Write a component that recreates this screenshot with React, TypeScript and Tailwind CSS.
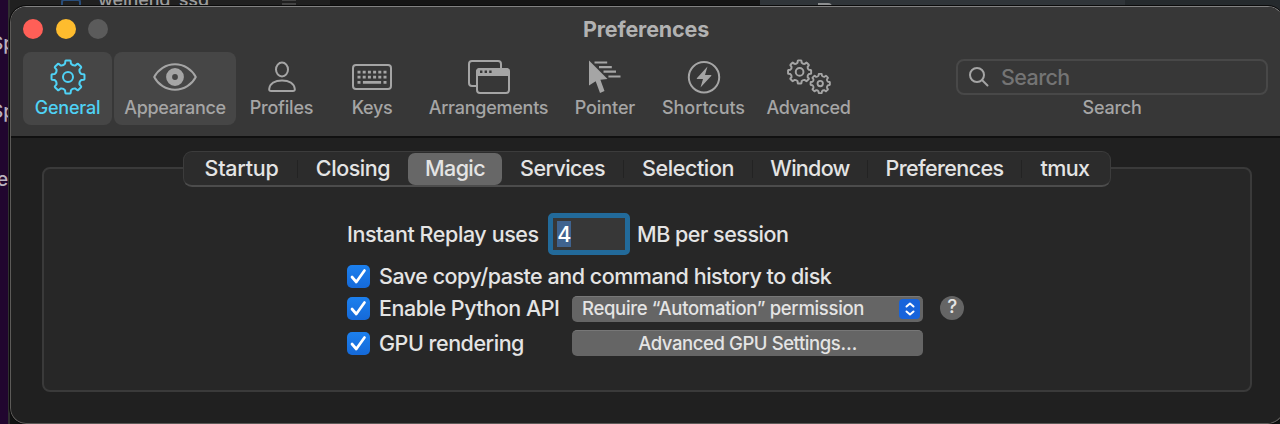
import type { ReactNode } from "react";

function gearPath(outer: number, inner: number) {
  const point = (radius: number, degrees: number) => {
    const a = (degrees * Math.PI) / 180;
    return `${(18 + radius * Math.sin(a)).toFixed(2)} ${(18 - radius * Math.cos(a)).toFixed(2)}`;
  };
  let d = "";
  for (let i = 0; i < 8; i++) {
    const c = i * 45;
    d += `${i === 0 ? "M" : "L"}${point(inner + 0.6, c - 12.5)} L${point(outer - 0.5, c - 9.5)} Q${point(outer, c - 9)} ${point(outer, c - 7)} L${point(outer, c + 7)} Q${point(outer, c + 9)} ${point(outer - 0.5, c + 9.5)} L${point(inner + 0.6, c + 12.5)} Q${point(inner - 1, c + 22.5)} ${point(inner + 0.6, c + 32.5)} `;
  }
  return d + "Z";
}

const GEAR = gearPath(16.6, 13);

function GeneralIcon() {
  return (
    <svg width="36" height="36" viewBox="0 0 36 36" fill="none" stroke="currentColor" strokeWidth="2" strokeLinejoin="round">
      <path d={GEAR} />
      <circle cx="18" cy="18" r="5" />
    </svg>
  );
}

function AppearanceIcon() {
  return (
    <svg width="44" height="30" viewBox="0 0 44 30" fill="none" stroke="currentColor">
      <path d="M1.200 15 C5 7.500 13 2.200 22 2.200 C31 2.200 39 7.500 42.800 15 C39 22.500 31 27.800 22 27.800 C13 27.800 5 22.500 1.200 15Z" strokeWidth="2" strokeLinejoin="round" />
      <circle cx="22" cy="15" r="5.900" strokeWidth="6" />
    </svg>
  );
}

function ProfilesIcon() {
  return (
    <svg width="30" height="32" viewBox="0 0 30 32" fill="none" stroke="currentColor" strokeWidth="2">
      <ellipse cx="15" cy="8.500" rx="6" ry="6.900" />
      <path d="M4.200 30 Q2 30 2.200 28 C2.800 22.500 8 19.500 15 19.500 C22 19.500 27.200 22.500 27.800 28 Q28 30 25.800 30 Z" />
    </svg>
  );
}

function KeysIcon() {
  return (
    <svg width="40" height="26" viewBox="0 0 40 26" fill="none" stroke="currentColor">
      <rect x="1" y="1" width="38" height="24" rx="3" strokeWidth="2" />
      <path d="M5.500 8.200h30M5.500 13.200h30" strokeWidth="2.800" strokeDasharray="3 2.200" />
      <path d="M5.500 18.400h3M10.900 18.400h18.200M31.500 18.400h3" strokeWidth="2.800" />
    </svg>
  );
}

function ArrangementsIcon() {
  return (
    <svg width="42" height="34" viewBox="0 0 42 34" fill="none" stroke="currentColor" strokeWidth="2">
      <path d="M8 26H4 Q1 26 1 23V4 Q1 1 4 1H30 Q33 1 33 4V8" />
      <rect x="9" y="9" width="32" height="24" rx="3" />
      <path d="M9 15V12Q9 9 12 9H38Q41 9 41 12V15Z" fill="currentColor" />
      <path d="M12 11.800h2.400M16.600 11.800h2.400M21.200 11.800h2.400" stroke="#373737" strokeWidth="2.400" />
    </svg>
  );
}

function PointerIcon() {
  return (
    <svg width="32" height="34" viewBox="0 0 32 34">
      <path d="M0 .5 L18.500 19 L11.400 19.800 L15.500 31 L11 33 L6.700 21.300 L0 25.500Z" fill="currentColor" />
      <path d="M5.500 2.500H18.200M10 7.100H22.800M14.500 11.700H27M19.400 16.500H31.500" stroke="currentColor" strokeWidth="2.200" />
    </svg>
  );
}

function ShortcutsIcon() {
  return (
    <svg width="34" height="34" viewBox="0 0 34 34">
      <circle cx="17" cy="17.300" r="15.200" fill="none" stroke="currentColor" strokeWidth="2" />
      <path d="M20.500 6.500 L9.800 18.200 Q9.500 19 10.200 19 H16 L13.500 27.500 L24.400 15.700 Q24.600 15 23.800 15 H18Z" fill="currentColor" />
    </svg>
  );
}

function AdvancedIcon() {
  return (
    <svg width="44" height="36" viewBox="0 0 44 36" fill="none" stroke="currentColor" strokeLinejoin="round">
      <g transform="translate(0 .3) scale(.7)" strokeWidth="2.800">
        <path d={GEAR} />
        <circle cx="18" cy="18" r="5.500" />
      </g>
      <g transform="translate(22.700 14) scale(.585)" strokeWidth="3.200">
        <path d={GEAR} />
        <circle cx="18" cy="18" r="4.600" />
      </g>
    </svg>
  );
}

function ToolItem({ label, className, textClass, children }: { label: string; className: string; textClass: string; children: ReactNode }) {
  return (
    <button className={`flex h-[73px] shrink-0 flex-col items-center rounded-[8px] ${className}`}>
      <span className="mt-[7px] flex h-9 items-center">{children}</span>
      <span className={`mt-px whitespace-nowrap text-[18px] leading-6 font-medium ${textClass}`}>{label}</span>
    </button>
  );
}

function Tab({ label, className, textClass }: { label: string; className: string; textClass: string }) {
  return (
    <button className={`flex h-8 shrink-0 items-center justify-center whitespace-nowrap ${className}`}>
      <span className={textClass}>{label}</span>
    </button>
  );
}

function Divider() {
  return <span className="h-[18px] w-px shrink-0 bg-[#232323]" />;
}

function Check() {
  return (
    <span className="flex size-[23px] shrink-0 items-center justify-center rounded-[5px] bg-linear-to-b from-[#1c80ee] to-[#1569d8]">
      <svg width="17" height="17" viewBox="0 0 17 17" fill="none" stroke="white" strokeWidth="2.700" strokeLinecap="round" strokeLinejoin="round">
        <path d="M2 9 L6.300 14 L14.500 2.500" />
      </svg>
    </span>
  );
}

export default function App() {
  return (
    <div className="relative h-[424px] w-[1280px] overflow-hidden bg-[#111212] font-['Inter',sans-serif] font-[450] text-[#e4e4e4]">
      <div className="absolute inset-0 flex">
        <div className="relative w-2 shrink-0 overflow-hidden bg-[#21062f] text-[19px] font-medium text-[#b9b1be]">
          <span className="absolute top-[30px] left-[-9px]">Sp</span>
          <span className="absolute top-[98px] left-[-9px]">Sp</span>
          <span className="absolute top-[166px] left-[-3px]">e</span>
        </div>
        <div className="w-[2px] shrink-0 bg-[#303030]" />
        <div className="relative h-[20px] w-[320px] shrink-0 overflow-hidden bg-[#202020] text-[18px] text-[#9c9c9c]">
          <span className="absolute top-[-1px] left-[51px] h-4 w-5 rounded-[3px] border-2 border-[#294d79]" />
          <span className="absolute top-[-11px] left-[88px] leading-[22px] font-medium tracking-[-.1px]">weihend_ssd</span>
          <span className="absolute top-[-1px] left-[272px] h-[2px] w-[14px] bg-[#444] shadow-[0_4px_#444]" />
        </div>
        <div className="h-[20px] w-[430px] shrink-0 bg-[#151515]" />
        <div className="relative h-[20px] w-[365px] shrink-0 bg-[#303539]">
          <span className="absolute top-[3px] left-[58px] h-4 w-[14px] rounded-tr-[4px] border-2 border-[#8d8f90]" />
        </div>
        <div className="h-[20px] flex-1 bg-[#252a2d]" />
      </div>

      <main className="absolute top-[6px] left-[10px] flex h-[418px] w-[1274px] flex-col overflow-hidden rounded-[16px] border border-[#5c5a58] border-t-[#828282] bg-[#202020] outline outline-[#0b0b0b]">
        <header className="flex h-[131px] shrink-0 flex-col border-b-2 border-[#101010] bg-[#373737]">
          <div className="flex h-[45px] shrink-0 items-center pb-[2px] pl-[12px]">
            <div className="flex w-[560px] shrink-0 gap-[12.500px]">
              <span className="size-5 rounded-full bg-[#ff5f57]" />
              <span className="size-5 rounded-full bg-[#febc2e]" />
              <span className="size-5 rounded-full bg-[#5b5b5b]" />
            </div>
            <h1 className="text-[21.500px] leading-7 font-bold tracking-[-.15px] text-[#b2b2b2]">Preferences</h1>
          </div>
          <div className="flex gap-[2px] pl-[12px] text-[#a5a5a5]">
            <ToolItem label="General" className="w-[89px] bg-[#464646] text-[#4fd2f5]" textClass="tracking-[-.2px]"><GeneralIcon /></ToolItem>
            <ToolItem label="Appearance" className="w-[122px] bg-[#464646]" textClass="tracking-[-.35px]"><AppearanceIcon /></ToolItem>
            <ToolItem label="Profiles" className="w-[87px]" textClass="tracking-[-.2px]"><ProfilesIcon /></ToolItem>
            <ToolItem label="Keys" className="w-[90px]" textClass="tracking-[-.4px]"><KeysIcon /></ToolItem>
            <ToolItem label="Arrangements" className="w-[139px]" textClass="tracking-[-.25px]"><ArrangementsIcon /></ToolItem>
            <ToolItem label="Pointer" className="w-[90px]" textClass="tracking-[-.1px]"><PointerIcon /></ToolItem>
            <ToolItem label="Shortcuts" className="w-[103px]" textClass="tracking-[-.05px]"><ShortcutsIcon /></ToolItem>
            <ToolItem label="Advanced" className="w-[103px]" textClass="tracking-[-.4px]"><AdvancedIcon /></ToolItem>
            <div className="ml-[94px] flex w-[312px] shrink-0 flex-col items-center pt-[7px]">
              <div className="flex h-9 w-full items-center gap-[12px] rounded-[8px] border-2 border-[#484848] pl-[11px]">
                <svg width="20" height="20" viewBox="0 0 20 20" fill="none" stroke="currentColor" strokeWidth="2" strokeLinecap="round">
                  <circle cx="8" cy="8" r="7" />
                  <path d="M13 13 L18.500 18.500" />
                </svg>
                <span className="text-[21.500px] leading-7 tracking-[-.6px] text-[#747474]">Search</span>
              </div>
              <span className="mt-px text-[18px] leading-6 font-medium tracking-[-.25px]">Search</span>
            </div>
          </div>
        </header>

        <section className="flex flex-col pt-[13px]">
          <nav className="relative ml-[172px] flex h-9 w-[928px] items-center rounded-[9px] border border-[#3c3c3c] border-b-2 border-b-[#4c4c4c] bg-[#2c2c2c] text-[21.500px]">
            <Tab label="Startup" className="w-[113px]" textClass="pl-[2px] tracking-[-.25px]" />
            <Divider />
            <Tab label="Closing" className="w-[110px]" textClass="tracking-[-.45px]" />
            <Tab label="Magic" className="w-[94px] rounded-[7px] bg-[#676767]" textClass="tracking-[-.6px]" />
            <Tab label="Services" className="w-[121px]" textClass="tracking-[-.6px]" />
            <Divider />
            <Tab label="Selection" className="w-[128px]" textClass="tracking-[-.4px]" />
            <Divider />
            <Tab label="Window" className="w-[114px]" textClass="tracking-[-.7px]" />
            <Divider />
            <Tab label="Preferences" className="w-[153px]" textClass="tracking-[-.6px]" />
            <Divider />
            <Tab label="tmux" className="w-[86px]" textClass="tracking-[-.6px]" />
          </nav>
          <div className="mt-[-20px] ml-[31px] flex h-[225px] w-[1210px] flex-col rounded-[8px] border-2 border-[#3a3a3a] bg-[#272727] pt-[43px] pl-[303px] text-[21.500px] tracking-[-.48px]">
            <div className="flex h-[44px] items-center">
              <span className="w-[201px] shrink-0 whitespace-nowrap tracking-[-.42px]">Instant Replay uses</span>
              <div className="flex h-[42px] w-[82px] shrink-0 items-center rounded-[5px] border-[5.500px] border-[#226a9a] bg-[#373737] pl-[4px]">
                <span className="flex h-[26px] w-[14px] items-center justify-center bg-[#3f638f] text-white">4</span>
              </div>
              <span className="ml-[7px] whitespace-nowrap">MB per session</span>
            </div>
            <div className="mt-[4px] flex h-[32px] items-center gap-[9px]">
              <Check />
              <span className="whitespace-nowrap">Save copy/paste and command history to disk</span>
            </div>
            <div className="flex h-[33px] items-center gap-[9px]">
              <Check />
              <span className="w-[184px] shrink-0 whitespace-nowrap">Enable Python API</span>
              <button className="flex h-[26px] w-[351px] shrink-0 items-center justify-between rounded-[5px] border-t border-[#777] bg-[#656565] pr-[3px] pl-[10px] text-[18.500px] tracking-[-.32px]">
                <span className="whitespace-nowrap">Require “Automation” permission</span>
                <span className="flex h-5 w-[21px] items-center justify-center rounded-[4px] bg-[#1764db]">
                  <svg width="10" height="14" viewBox="0 0 10 14" fill="none" stroke="white" strokeWidth="2" strokeLinecap="round" strokeLinejoin="round">
                    <path d="M1.500 4.500 L5 1.500 L8.500 4.500M1.500 9.500 L5 12.500 L8.500 9.500" />
                  </svg>
                </span>
              </button>
              <span className="mb-[2px] ml-[8px] flex size-6 items-center justify-center rounded-full bg-[#656565] text-[19px]">?</span>
            </div>
            <div className="mt-[1px] flex h-[34px] items-center gap-[9px]">
              <Check />
              <span className="w-[184px] shrink-0 whitespace-nowrap">GPU rendering</span>
              <button className="flex h-[26px] w-[351px] shrink-0 items-center justify-center rounded-[5px] border-t border-[#777] bg-[#656565] text-[18.500px] tracking-[-.42px]">
                Advanced GPU Settings…
              </button>
            </div>
          </div>
        </section>
      </main>
    </div>
  );
}
